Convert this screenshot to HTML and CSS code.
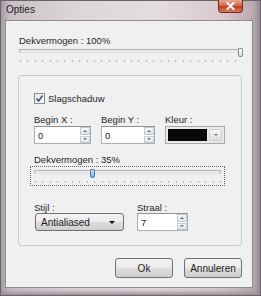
FILE: index.html
```html
<!DOCTYPE html>
<html lang="nl">
<head>
    <meta charset="UTF-8">
    <title>Opties</title>
    <link rel="stylesheet" href="styles.css">
</head>
<body>
    <div class="window">
        <div class="titlebar">
            <span class="title">Opties</span>
            <span class="close">
                <svg width="9" height="8" viewBox="0 0 9 8">
                    <path d="M1.5 1 L7.5 7 M7.5 1 L1.5 7" stroke="#fff" stroke-width="2" stroke-linecap="square"/>
                </svg>
            </span>
        </div>

        <div class="client">
            <div class="label top-label">Dekvermogen : 100%</div>
            <div class="slider top-slider">
                <div class="track"></div>
                <div class="thumb" style="left: 219px;"></div>
                <div class="ticks"></div>
            </div>

            <div class="group">
                <div class="check-row">
                    <span class="checkbox">
                        <svg width="9" height="9" viewBox="0 0 9 9">
                            <path d="M1.5 4.5 L3.6 7 L7.6 1.5" fill="none" stroke="#3b4a5e" stroke-width="1.4"/>
                        </svg>
                    </span>
                    <span>Slagschaduw</span>
                </div>

                <div class="fields">
                    <div class="field">
                        <div class="label">Begin X :</div>
                        <div class="spin">
                            <span class="spin-value">0</span>
                            <span class="spin-buttons"><i class="up"></i><i class="down"></i></span>
                        </div>
                    </div>
                    <div class="field">
                        <div class="label">Begin Y :</div>
                        <div class="spin">
                            <span class="spin-value">0</span>
                            <span class="spin-buttons"><i class="up"></i><i class="down"></i></span>
                        </div>
                    </div>
                    <div class="field">
                        <div class="label">Kleur :</div>
                        <div class="color-pick">
                            <span class="swatch"></span>
                            <span class="color-btn"><i class="down"></i></span>
                        </div>
                    </div>
                </div>

                <div class="label mid-label">Dekvermogen : 35%</div>
                <div class="focus-box">
                    <div class="slider">
                        <div class="track"></div>
                        <div class="thumb active" style="left: 56px;"></div>
                        <div class="ticks"></div>
                    </div>
                </div>

                <div class="fields bottom-fields">
                    <div class="field">
                        <div class="label">Stijl :</div>
                        <div class="combo">
                            <span>Antialiased</span>
                            <i class="arrow"></i>
                        </div>
                    </div>
                    <div class="field">
                        <div class="label">Straal :</div>
                        <div class="spin">
                            <span class="spin-value">7</span>
                            <span class="spin-buttons"><i class="up"></i><i class="down"></i></span>
                        </div>
                    </div>
                </div>
            </div>

            <div class="buttons">
                <button>Ok</button>
                <button>Annuleren</button>
            </div>
        </div>
    </div>
</body>
</html>
```

FILE: styles.css
```css
body {
    margin: 0;
    font-family: "Liberation Sans", Arial, sans-serif;
    font-size: 9.5px;
    color: #1e1e1e;
    overflow: hidden;
}

.window {
    width: 261px;
    height: 296px;
    box-sizing: border-box;
    background: linear-gradient(90deg, #a49ca3 0, #c9c1c7 4%, #ddd6da 30%, #e4dde0 60%, #d9c8ce 85%, #b9aab1 97%, #8f868c 100%);
    box-shadow: inset 0 0 0 1px #6b6369, inset 0 -4px 4px #9b9398;
    overflow: hidden;
}

.titlebar {
    height: 20px;
    display: flex;
    align-items: flex-start;
    justify-content: space-between;
}

.title {
    font-size: 10px;
    color: #202020;
    padding: 4px 0 0 6px;
}

.close {
    width: 25px;
    height: 13px;
    margin-right: 18px;
    box-sizing: border-box;
    border: 1px solid #7a2a1a;
    border-top: none;
    border-radius: 0 0 4px 4px;
    background: linear-gradient(#eba593, #d66a50 45%, #c4401f 55%, #d77a5e);
    display: flex;
    align-items: center;
    justify-content: center;
}

.client {
    margin-left: 5px;
    width: 248px;
    height: 268px;
    box-sizing: border-box;
    border: 1px solid #8e8a8d;
    background-color: #f0f0f0;
    padding: 14px 10px 0 12px;
}

.label {
    height: 12px;
    line-height: 12px;
    white-space: nowrap;
}

.top-label {
    margin-left: 1px;
}

.slider {
    position: relative;
    height: 16px;
}

.top-slider {
    margin-left: 1px;
    width: 223px;
}

.track {
    position: absolute;
    left: 0;
    right: 0;
    top: 2px;
    height: 4px;
    box-sizing: border-box;
    border: 1px solid #b4b4b4;
    border-bottom-color: #e2e2e2;
    background-color: #e7eaea;
}

.thumb {
    position: absolute;
    top: 1px;
    width: 5px;
    height: 9px;
    box-sizing: border-box;
    border: 1px solid #8a8a8a;
    border-radius: 1px 1px 2px 2px;
    background: linear-gradient(#ffffff, #dcdcdc);
}

.thumb.active {
    border-color: #3d7bad;
    background: linear-gradient(#c9e6fa, #73b3e0);
}

.ticks {
    position: absolute;
    left: 1px;
    right: 0;
    top: 13px;
    height: 2px;
    background: repeating-linear-gradient(90deg, #b7b7b7 0 1px, transparent 1px 7.4px);
}

.group {
    margin-top: 12px;
    width: 224px;
    height: 171px;
    box-sizing: border-box;
    border: 1px solid #cbcbcb;
    border-radius: 3px;
    padding: 16px 0 0 15px;
}

.check-row {
    display: flex;
    align-items: center;
    gap: 3px;
    height: 12px;
}

.checkbox {
    width: 11px;
    height: 11px;
    box-sizing: border-box;
    border: 1px solid #8e8f8f;
    background: linear-gradient(135deg, #e6e6e6, #fbfbfb);
    display: flex;
    align-items: center;
    justify-content: center;
}

.fields {
    margin-top: 10px;
    display: grid;
    grid-template-columns: 57px 54px 60px;
    column-gap: 10px;
}

.spin {
    height: 18px;
    box-sizing: border-box;
    border: 1px solid #abadb3;
    border-top-color: #8d9096;
    background-color: #fff;
    display: flex;
    justify-content: space-between;
}

.spin-value {
    padding: 3px 0 0 3px;
}

.spin-buttons {
    width: 10px;
    display: flex;
    flex-direction: column;
    gap: 1px;
}

.spin-buttons i {
    flex: 1;
    border: 1px solid #c4cbd2;
    background: linear-gradient(#f6f7f8, #dfe3e7);
    display: flex;
    align-items: center;
    justify-content: center;
}

.spin-buttons i::after,
.color-btn i::after {
    content: "";
    border-left: 2px solid transparent;
    border-right: 2px solid transparent;
}

.spin-buttons .up::after {
    border-bottom: 2px solid #6a7280;
}

.spin-buttons .down::after,
.color-btn .down::after {
    border-top: 2px solid #6a7280;
}

.color-pick {
    height: 18px;
    box-sizing: border-box;
    border: 1px solid #a9a9a9;
    background-color: #e9e9e9;
    padding: 2px;
    display: flex;
    gap: 2px;
}

.swatch {
    flex: 1;
    background-color: #080808;
}

.color-btn {
    width: 11px;
    border: 1px solid #cfcfcf;
    background: linear-gradient(#f5f5f5, #dedede);
    display: flex;
    align-items: center;
    justify-content: center;
}

.color-btn i {
    display: flex;
}

.mid-label {
    margin-top: 10px;
}

.focus-box {
    margin-left: -4px;
    width: 195px;
    height: 20px;
    box-sizing: border-box;
    border: 1px dotted #6a6a6a;
    padding: 1px 3px 0 3px;
}

.bottom-fields {
    margin-top: 16px;
    grid-template-columns: 90px 51px;
    column-gap: 13px;
}

.bottom-fields .label {
    height: 11px;
    line-height: 11px;
}

.combo {
    margin-left: 1px;
    height: 18px;
    box-sizing: border-box;
    border: 1px solid #707070;
    border-radius: 3px;
    background: linear-gradient(#f2f2f2 0, #ebebeb 50%, #dddddd 51%, #cfcfcf 100%);
    display: flex;
    align-items: center;
    justify-content: space-between;
    padding: 0 8px 0 5px;
    font-size: 10px;
}

.arrow {
    border-left: 3px solid transparent;
    border-right: 3px solid transparent;
    border-top: 3px solid #111;
}

.buttons {
    margin-top: 12px;
    width: 224px;
    display: flex;
    justify-content: flex-end;
    gap: 11px;
}

button {
    width: 58px;
    height: 20px;
    font-family: inherit;
    font-size: 10px;
    color: #1e1e1e;
    border: 1px solid #707070;
    border-radius: 3px;
    background: linear-gradient(#f2f2f2 0, #ebebeb 50%, #dddddd 51%, #cfcfcf 100%);
    padding: 0;
}
```
